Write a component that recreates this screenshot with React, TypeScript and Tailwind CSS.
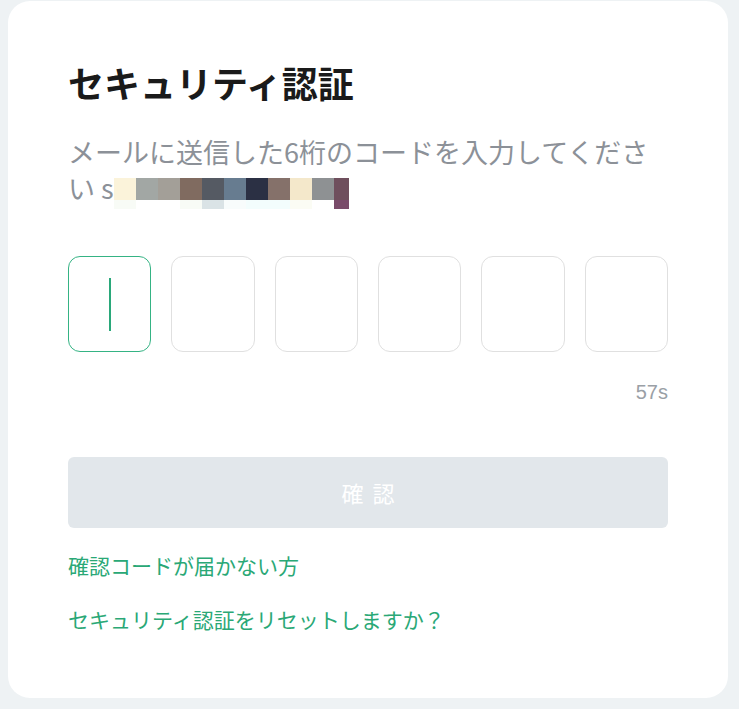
import React from "react";

const MOSAIC: { top: string; bottom: string; w: string }[] = [
  { top: "bg-[#fbf3da]", bottom: "bg-[#f8fbf6]", w: "w-[22px]" },
  { top: "bg-[#a2a7a4]", bottom: "bg-white", w: "w-[22px]" },
  { top: "bg-[#a39f98]", bottom: "bg-white", w: "w-[22px]" },
  { top: "bg-[#806b60]", bottom: "bg-[#f8fbf6]", w: "w-[22px]" },
  { top: "bg-[#555a63]", bottom: "bg-[#dae3e6]", w: "w-[22px]" },
  { top: "bg-[#677c90]", bottom: "bg-[#f8fcfc]", w: "w-[22px]" },
  { top: "bg-[#2b3044]", bottom: "bg-[#f3fdfd]", w: "w-[22px]" },
  { top: "bg-[#85716a]", bottom: "bg-[#f3fdfd]", w: "w-[22px]" },
  { top: "bg-[#f4e8cb]", bottom: "bg-[#fbfcf4]", w: "w-[22px]" },
  { top: "bg-[#8e9193]", bottom: "bg-white", w: "w-[22px]" },
  { top: "bg-[#6f4f5d]", bottom: "bg-[#7a4c6a]", w: "w-[15px]" },
];

// redacted email, drawn as a pixel mosaic
function Mosaic() {
  return (
    <span className="inline-flex align-[-1px]">
      {MOSAIC.map((m, i) => (
        <span key={i} className={`flex flex-col ${m.w}`}>
          <span className={`h-[22px] ${m.top}`} />
          <span className={`h-[9px] ${m.bottom}`} />
        </span>
      ))}
    </span>
  );
}

export default function App() {
  const boxes = [0, 1, 2, 3, 4, 5];
  return (
    <div className="min-h-screen bg-[#eef2f4] pl-2 pr-[11px] pt-px font-['Noto_Sans_CJK_JP',sans-serif]">
      <div className="rounded-[22px] bg-white px-[60px] pt-[57px] pb-[65px]">
        <h1 className="text-[36px] font-bold leading-[48px] text-[#1a1a1a]">
          セキュリティ認証
        </h1>

        <p className="mt-[28px] text-[27px] leading-[36px] text-[#8c9198]">
          {"メールに送信した6桁のコードを入力してください s"}
          <Mosaic />
        </p>

        <div className="mt-[47px] flex gap-[20px]">
          {boxes.map((i) => (
            <div
              key={i}
              className={`flex h-[96px] flex-1 items-center justify-center rounded-[12px] border ${
                i === 0 ? "border-[#35b384]" : "border-[#e0e0e0]"
              }`}
            >
              {i === 0 && <div className="h-[53px] w-[2px] bg-[#2aa87a]" />}
            </div>
          ))}
        </div>

        <div className="mt-[27px] text-right font-['Liberation_Sans',sans-serif] text-[20px] leading-[26px] text-[#9aa0a6]">
          57s
        </div>

        <button
          disabled
          className="mt-[52px] flex h-[71px] w-full items-center justify-center rounded-[6px] bg-[#e2e7eb] text-[22px] tracking-[9px] text-white"
        >
          <span className="pl-[9px]">確認</span>
        </button>

        <div className="mt-[23px] text-[21px] leading-[28px] text-[#2aa876]">
          確認コードが届かない方
        </div>
        <div className="mt-[26px] text-[21px] leading-[28px] text-[#2aa876]">
          セキュリティ認証をリセットしますか？
        </div>
      </div>
    </div>
  );
}
